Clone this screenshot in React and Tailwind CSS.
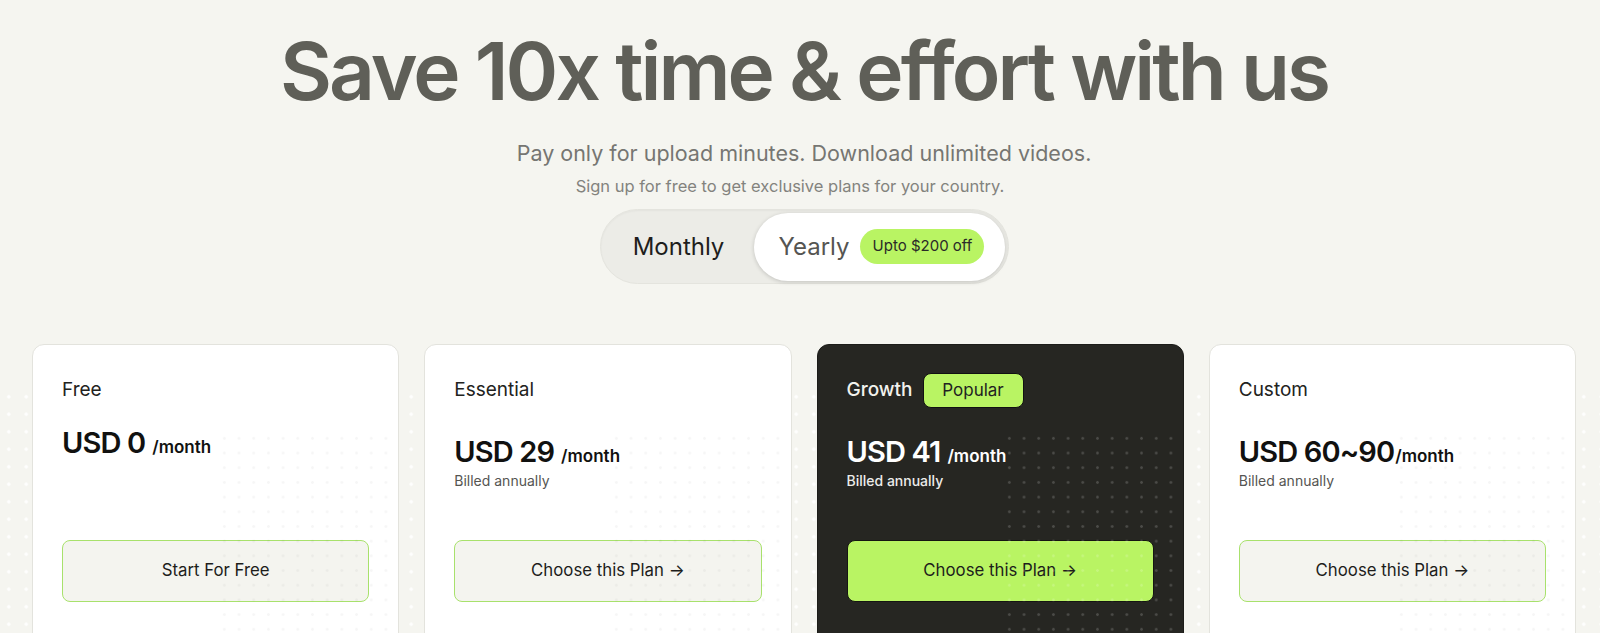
import React from 'react'

const plans = [
  { name: 'Free', price: 'USD 0', gap: true, billed: null, cta: 'Start For Free' },
  { name: 'Essential', price: 'USD 29', gap: true, billed: 'Billed annually', cta: 'Choose this Plan →' },
  { name: 'Growth', price: 'USD 41', gap: true, billed: 'Billed annually', cta: 'Choose this Plan →', dark: true, badge: 'Popular' },
  { name: 'Custom', price: 'USD 60~90', gap: false, billed: 'Billed annually', cta: 'Choose this Plan →' },
]

function PlanCard({ plan }) {
  const dark = plan.dark
  return (
    <div
      className={
        'relative h-[330px] overflow-hidden rounded-[12px] border px-[29px] pt-[28px] ' +
        (dark ? 'border-[#1c1c19] bg-[#262622]' : 'border-[#e3e3dd] bg-white')
      }
    >
      {/* dotted texture on the right half */}
      <div
        className={
          'pointer-events-none absolute left-[184px] right-0 top-[86px] bottom-0 z-10 bg-[size:14.7px_14.7px] ' +
          (dark
            ? 'bg-[radial-gradient(circle,rgba(255,255,255,0.17)_1.1px,transparent_1.6px)]'
            : 'bg-[radial-gradient(circle,rgba(0,0,0,0.035)_1.1px,transparent_1.6px)]')
        }
      />
      <div className="flex h-[35px] items-center gap-[10px]">
        <span className={'text-[19px] ' + (dark ? 'font-medium text-[#f2f2ee]' : 'text-[#222220]')}>{plan.name}</span>
        {plan.badge ? (
          <span className="flex h-[35px] w-[101px] items-center justify-center rounded-[8px] border border-[#111] bg-[#b9f463] text-[17px] text-[#222]">
            {plan.badge}
          </span>
        ) : null}
      </div>

      <div className={'flex h-[132px] flex-col ' + (plan.billed ? 'pt-[29px]' : 'pt-[20px]')}>
        <div className="flex items-baseline">
          <span
            className={
              'text-[29px] leading-none font-semibold tracking-[-0.03em] ' + (dark ? 'text-white' : 'text-[#111110]')
            }
          >
            {plan.price}
          </span>
          <span
            className={
              'text-[17px] leading-none font-semibold ' +
              (plan.gap ? 'ml-[7px] ' : 'ml-[1px] ') +
              (dark ? 'text-white' : 'text-[#111110]')
            }
          >
            /month
          </span>
        </div>
        {plan.billed ? (
          <div className={'mt-[5px] text-[14px] leading-5 ' + (dark ? 'font-medium text-[#ececea]' : 'text-[#555552]')}>
            {plan.billed}
          </div>
        ) : null}
      </div>

      <button
        className={
          'flex h-[62px] w-full items-center justify-center rounded-[8px] border text-[16.8px] text-[#1d1d1b] ' +
          (dark ? 'border-[#151512] bg-[#b9f463]' : 'border-[#a8e16c] bg-[#f4f4ef]')
        }
      >
        {plan.cta}
      </button>
    </div>
  )
}

export default function App() {
  return (
    <div className="relative min-h-screen overflow-hidden bg-[#f5f5f0] pl-[8px] font-['Inter',sans-serif]">
      {/* page dot pattern behind the cards */}
      <div className="pointer-events-none absolute inset-x-0 top-[388px] bottom-0 bg-[radial-gradient(circle,rgba(255,255,255,0.95)_1.4px,transparent_1.9px)] bg-[size:17.5px_17.5px]" />

      <div className="relative flex flex-col items-center pt-[31px]">
        <h1 className="text-[80px] leading-none font-semibold tracking-[-0.037em] text-[#5f5f58]">
          Save 10x time &amp; effort with us
        </h1>
        <p className="mt-[28px] text-[21.5px] leading-[28px] text-[#767672]">
          Pay only for upload minutes. Download unlimited videos.
        </p>
        <p className="mt-[9px] pr-[28px] text-[16.5px] leading-5 text-[#83837e]">
          Sign up for free to get exclusive plans for your country.
        </p>

        <div className="mt-[13px] flex h-[75px] w-[409px] items-center rounded-full border border-[#e4e4de] bg-[#ececE7] p-[3px] shadow-[inset_0_1px_2px_rgba(0,0,0,0.04)]">
          <div className="flex h-full w-[150px] items-center justify-center text-[24px] text-[#1e1e1c]">Monthly</div>
          <div className="flex h-[68px] flex-1 items-center rounded-full bg-white pl-[25px] shadow-[0_1px_4px_rgba(0,0,0,0.18)]">
            <span className="text-[24px] text-[#555552]">Yearly</span>
            <span className="ml-[11px] flex h-[35px] w-[124px] items-center justify-center rounded-full bg-[#b9f463] text-[15px] text-[#2a2a28]">
              Upto $200 off
            </span>
          </div>
        </div>
      </div>

      <div className="relative mt-[60px] grid grid-cols-4 gap-[25px] px-[24px]">
        {plans.map((p) => (
          <PlanCard key={p.name} plan={p} />
        ))}
      </div>
    </div>
  )
}
